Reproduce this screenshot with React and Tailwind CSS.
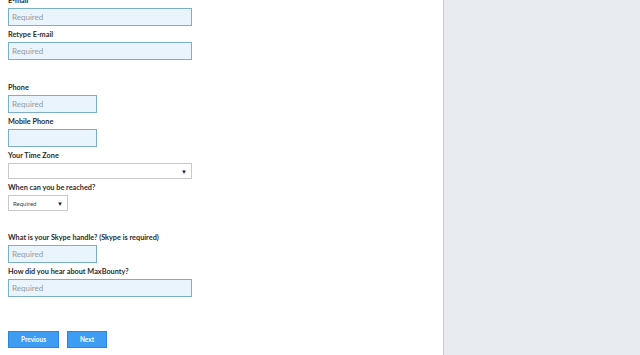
import React from "react";

const font = { fontFamily: "Lato, 'Open Sans', sans-serif" };

const Label = ({ children, first }) => (
    <div className={`${first ? "" : "mt-[4px]"} text-[7.3px] leading-[10px] font-bold text-[#2b2b2b] h-[10px]`}>{children}</div>
);

const TextInput = ({ wide, placeholder = "Required" }) => (
    <div
        className={`mt-[2px] h-[18px] ${wide ? "w-[184px]" : "w-[89px]"} border border-[#7aaecb] bg-[#e9f4fd] flex items-center pl-[3px] text-[8px] text-[#949ca4]`}
    >
        {placeholder}
    </div>
);

const Field = ({ label, wide, first, placeholder }) => (
    <>
        <Label first={first}>{label}</Label>
        <TextInput wide={wide} placeholder={placeholder} />
    </>
);

const App = () => {
    return (
        <div className="flex h-[355px] w-[640px] overflow-hidden bg-white" style={font}>
            {/* Form column */}
            <div className="w-[443px] pl-[8px]">
                <div className="-mt-[4px] flex flex-col">
                    <Field label="E-mail" wide first />
                    <Field label="Retype E-mail" wide />

                    <div className="mt-[19px]" />
                    <Field label="Phone" />
                    <Field label="Mobile Phone" placeholder="" />

                    <Label>Your Time Zone</Label>
                    <div className="mt-[2px] h-[16px] w-[184px] border border-[#c9c9c9] bg-white flex items-center justify-end pr-[4px]">
                        <span className="text-[6px] text-[#222]">▼</span>
                    </div>

                    <Label>When can you be reached?</Label>
                    <div className="mt-[2px] h-[16px] w-[60px] border border-[#c9c9c9] bg-white flex items-center justify-between pl-[4px] pr-[4px]">
                        <span className="text-[6px] text-[#444]">Required</span>
                        <span className="text-[6px] text-[#222]">▼</span>
                    </div>

                    <div className="mt-[18px]" />
                    <Field label="What is your Skype handle? (Skype is required)" />
                    <Field label="How did you hear about MaxBounty?" wide />

                    {/* Buttons */}
                    <div className="mt-[34px] flex gap-[8px]">
                        <button className="h-[17px] w-[51px] bg-[#3e9cf3] border border-[#2f86d6] text-white text-[6.5px] font-bold">
                            Previous
                        </button>
                        <button className="h-[17px] w-[40px] bg-[#3e9cf3] border border-[#2f86d6] text-white text-[6.5px] font-bold">
                            Next
                        </button>
                    </div>
                </div>
            </div>

            {/* Side panel */}
            <div className="w-px bg-[#c9cdd3]" />
            <div className="flex-1 bg-[#e8ebf0]" />
        </div>
    );
};

export default App;
